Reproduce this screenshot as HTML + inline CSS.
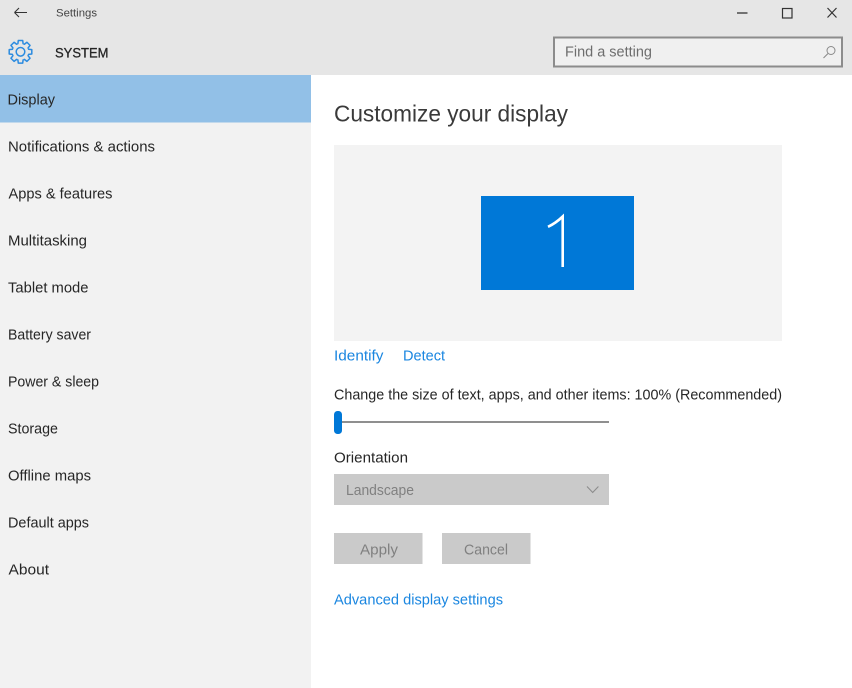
<!DOCTYPE html>
<html>
<head>
<meta charset="utf-8">
<style>
html,body{margin:0;padding:0;background:#fff;width:852px;height:688px;overflow:hidden}
svg{display:block;filter:blur(.35px)}
text{font-family:"Liberation Sans",sans-serif;font-size:15px;fill:#262626}
.l{fill:#1a86e0}
</style>
</head>
<body>
<svg width="852" height="688" viewBox="0 0 852 688" xmlns="http://www.w3.org/2000/svg">
<defs>
<path id="t" d="M-3.250 -7.850L-2.600 -8.100L-2.200 -11.300H2.200L2.600 -8.100L3.250 -7.850"/>
</defs>
<rect width="852" height="688" fill="#fff"/>
<rect width="852" height="75" fill="#e6e6e6"/>
<rect x="0" y="75" width="311" height="613" fill="#f2f2f2"/>
<rect x="0" y="75" width="311" height="47.500" fill="#92c0e7"/>

<!-- title bar -->
<path d="M14.500 12.500H27M14.500 12.500L19 8M14.500 12.500L19 17" fill="none" stroke="#333" stroke-width="1.100"/>
<text x="56" y="16.500" style="font-size:11px;fill:#444" textLength="41" lengthAdjust="spacingAndGlyphs">Settings</text>
<path d="M737 13H747.500" stroke="#333" stroke-width="1.300"/>
<rect x="782.500" y="8.500" width="9.500" height="9.500" fill="none" stroke="#333" stroke-width="1.200"/>
<path d="M827.500 8L836.500 17.500M836.500 8L827.500 17.500" stroke="#333" stroke-width="1.200"/>

<!-- gear -->
<g transform="translate(20.500 51.800)" fill="none" stroke="#2b8be0" stroke-width="1.500" stroke-linejoin="round">
<use href="#t"/>
<use href="#t" transform="rotate(45)"/>
<use href="#t" transform="rotate(90)"/>
<use href="#t" transform="rotate(135)"/>
<use href="#t" transform="rotate(180)"/>
<use href="#t" transform="rotate(225)"/>
<use href="#t" transform="rotate(270)"/>
<use href="#t" transform="rotate(315)"/>
<circle r="4.300"/>
</g>
<text x="55" y="57.500" textLength="53.500" lengthAdjust="spacingAndGlyphs" style="font-size:14px" stroke="#1f1f1f" stroke-width="0.300">SYSTEM</text>

<!-- search -->
<rect x="554" y="37.500" width="288" height="29" fill="#f0f0f0" stroke="#8c8c8c" stroke-width="2"/>
<text x="565" y="56.500" textLength="87" lengthAdjust="spacingAndGlyphs" style="fill:#6d6d6d">Find a setting</text>
<circle cx="831" cy="50.500" r="4" fill="none" stroke="#8a8a8a" stroke-width="1"/>
<path d="M828 53.500L823.500 58" stroke="#8a8a8a" stroke-width="1.100"/>

<!-- nav -->
<text x="7.500" y="104.500" textLength="47.500" lengthAdjust="spacingAndGlyphs">Display</text>
<text x="8" y="151.500" textLength="147" lengthAdjust="spacingAndGlyphs">Notifications &amp; actions</text>
<text x="8.500" y="198.500" textLength="104" lengthAdjust="spacingAndGlyphs">Apps &amp; features</text>
<text x="8" y="245.500" textLength="79" lengthAdjust="spacingAndGlyphs">Multitasking</text>
<text x="8" y="292.500" textLength="80.500" lengthAdjust="spacingAndGlyphs">Tablet mode</text>
<text x="8" y="339.500" textLength="83" lengthAdjust="spacingAndGlyphs">Battery saver</text>
<text x="8" y="386.500" textLength="91" lengthAdjust="spacingAndGlyphs">Power &amp; sleep</text>
<text x="8" y="433.500" textLength="50" lengthAdjust="spacingAndGlyphs">Storage</text>
<text x="8" y="480.500" textLength="83" lengthAdjust="spacingAndGlyphs">Offline maps</text>
<text x="8" y="527.500" textLength="81" lengthAdjust="spacingAndGlyphs">Default apps</text>
<text x="8.500" y="574.500" textLength="40.500" lengthAdjust="spacingAndGlyphs">About</text>

<!-- content -->
<text x="334" y="121.500" textLength="234" lengthAdjust="spacingAndGlyphs" style="font-size:23px;fill:#3a3a3a">Customize your display</text>
<rect x="334" y="145" width="448" height="196" fill="#f3f3f3"/>
<rect x="481" y="196" width="153" height="94" fill="#0078d7"/>
<path d="M548 226.800C553 224.500 558 221 562.700 216.500V267" fill="none" stroke="#fff" stroke-width="2.600"/>

<text x="334" y="360.500" class="l" textLength="49.500" lengthAdjust="spacingAndGlyphs">Identify</text>
<text x="403" y="360.500" class="l" textLength="42" lengthAdjust="spacingAndGlyphs">Detect</text>
<text x="334" y="399.500" textLength="448" lengthAdjust="spacingAndGlyphs">Change the size of text, apps, and other items: 100% (Recommended)</text>

<rect x="334" y="421" width="275" height="2" fill="#8f8f8f"/>
<rect x="334" y="411" width="8" height="23" rx="3.500" fill="#0078d7"/>

<text x="334" y="462.500" textLength="74" lengthAdjust="spacingAndGlyphs">Orientation</text>
<rect x="334" y="474" width="275" height="31" fill="#cacaca"/>
<text x="346" y="495" textLength="68" lengthAdjust="spacingAndGlyphs" style="fill:#808080">Landscape</text>
<path d="M587 486.500L592.700 492.500L598.400 486.500" fill="none" stroke="#8c8c8c" stroke-width="1.100"/>

<rect x="334" y="533" width="88.500" height="31" fill="#cacaca"/>
<text x="360" y="554.500" textLength="38" lengthAdjust="spacingAndGlyphs" style="fill:#808080">Apply</text>
<rect x="442" y="533" width="88.500" height="31" fill="#cacaca"/>
<text x="464" y="554.500" textLength="44" lengthAdjust="spacingAndGlyphs" style="fill:#808080">Cancel</text>

<text x="334" y="604.500" class="l" textLength="169" lengthAdjust="spacingAndGlyphs">Advanced display settings</text>
</svg>
</body>
</html>
